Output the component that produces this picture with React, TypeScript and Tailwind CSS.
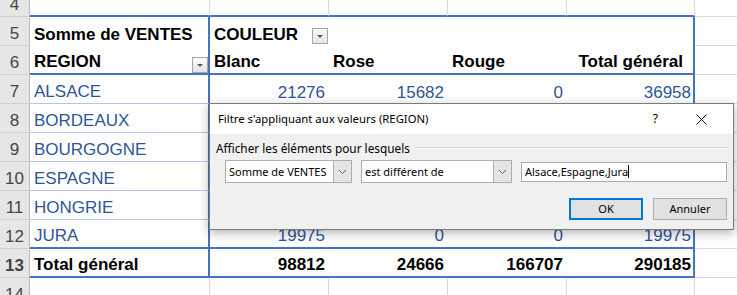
import React from 'react';

// Excel-like pivot table with the value filter dialog open on top of it

const regions = [
  { n: 7, name: 'ALSACE', b: '21276', c: '15682', d: '0', e: '36958' },
  { n: 8, name: 'BORDEAUX', b: '', c: '', d: '', e: '' },
  { n: 9, name: 'BOURGOGNE', b: '', c: '', d: '', e: '' },
  { n: 10, name: 'ESPAGNE', b: '', c: '', d: '', e: '' },
  { n: 11, name: 'HONGRIE', b: '', c: '', d: '', e: '' },
  { n: 12, name: 'JURA', b: '19975', c: '0', d: '0', e: '19975' },
];

function Hdr({ n }: { n: number }) {
  return (
    <div className="w-[30px] shrink-0 flex items-end justify-center pb-[1px] bg-[#e6e6e6] border-r border-b border-r-[#bdbdbd] border-b-[#d0d0d0] text-[#444]">
      {n}
    </div>
  );
}

function Cell({ className, children }: { className: string; children?: React.ReactNode }) {
  return (
    <div className={`relative shrink-0 flex items-end pb-[1px] px-[4px] whitespace-nowrap ${className}`}>
      {children}
    </div>
  );
}

function FilterButton() {
  return (
    <div className="w-[16px] h-[16px] bg-gradient-to-b from-[#fafafa] to-[#e4e4e4] border border-[#a6a6a6] flex items-center justify-center">
      <svg width="8" height="5" viewBox="0 0 8 5">
        <path d="M1 1 L7 1 L4 4 Z" fill="#555" />
      </svg>
    </div>
  );
}

function Chevron() {
  return (
    <svg width="9" height="6" viewBox="0 0 9 6">
      <path d="M1 1 L4.5 4.5 L8 1" fill="none" stroke="#606060" strokeWidth="1" />
    </svg>
  );
}

function Dropdown({ width, label }: { width: string; label: string }) {
  return (
    <div className={`${width} h-[23px] bg-white border border-[#adadad] flex items-stretch`}>
      <span className="flex-1 flex items-center pl-[3px] text-[11px]">{label}</span>
      <span className="w-[18px] bg-[#e5e5e5] border-l border-[#adadad] flex items-center justify-center">
        <Chevron />
      </span>
    </div>
  );
}

export default function App() {
  return (
    <div className="relative w-[738px] h-[295px] overflow-hidden bg-white font-['Liberation_Sans',Arial,sans-serif] text-[17px] leading-[20px] text-black">
      <div className="mt-[-12px] flex flex-col">
        {/* row 4 */}
        <div className="flex h-[29px]">
          <Hdr n={4} />
          <Cell className="w-[180px] border-r border-r-[#d9d9d9] border-b-2 border-b-[#4472c4]" />
          <Cell className="w-[119px] border-r border-r-[#d9d9d9] border-b-2 border-b-[#4472c4]" />
          <Cell className="w-[119px] border-r border-r-[#d9d9d9] border-b-2 border-b-[#4472c4]" />
          <Cell className="w-[119px] border-r border-r-[#d9d9d9] border-b-2 border-b-[#4472c4]" />
          <Cell className="w-[128px] border-r border-r-[#d9d9d9] border-b-2 border-b-[#4472c4]" />
          <Cell className="flex-1 border-r border-b border-[#d9d9d9]" />
        </div>

        {/* row 5 */}
        <div className="flex h-[29px]">
          <Hdr n={5} />
          <Cell className="w-[180px] border-r-2 border-r-[#4472c4] font-bold">Somme de VENTES</Cell>
          <Cell className="w-[119px] font-bold">
            COULEUR
            <span className="absolute right-[1px] bottom-[2px]">
              <FilterButton />
            </span>
          </Cell>
          <Cell className="w-[119px]" />
          <Cell className="w-[119px]" />
          <Cell className="w-[128px] border-r-2 border-r-[#4472c4]" />
          <Cell className="flex-1 border-r border-b border-[#d9d9d9]" />
        </div>

        {/* row 6 */}
        <div className="flex h-[29px]">
          <Hdr n={6} />
          <Cell className="w-[180px] border-r-2 border-r-[#4472c4] border-b-2 border-b-[#4472c4] font-bold">
            REGION
            <span className="absolute right-0 bottom-0">
              <FilterButton />
            </span>
          </Cell>
          <Cell className="w-[119px] border-b-2 border-b-[#4472c4] font-bold">Blanc</Cell>
          <Cell className="w-[119px] border-b-2 border-b-[#4472c4] font-bold">Rose</Cell>
          <Cell className="w-[119px] border-b-2 border-b-[#4472c4] font-bold">Rouge</Cell>
          <Cell className="w-[128px] justify-end pr-[10px] border-r-2 border-r-[#4472c4] border-b-2 border-b-[#4472c4] font-bold">
            Total général
          </Cell>
          <Cell className="flex-1 border-r border-b border-[#d9d9d9]" />
        </div>

        {/* rows 7 to 12 */}
        {regions.map((r) => {
          const last = r.n === 12;
          return (
            <div key={r.n} className="flex h-[29px] text-[#2f5597]">
              <Hdr n={r.n} />
              <Cell
                className={
                  last
                    ? 'w-[180px] border-r-2 border-r-[#4472c4] border-b-2 border-b-[#4472c4]'
                    : 'w-[180px] border-r-2 border-r-[#4472c4] border-b border-b-[#b4c6e7]'
                }
              >
                {r.name}
              </Cell>
              <Cell className={last ? 'w-[119px] justify-end pr-[4px] border-b-2 border-b-[#4472c4]' : 'w-[119px] justify-end pr-[4px]'}>
                {r.b}
              </Cell>
              <Cell className={last ? 'w-[119px] justify-end pr-[4px] border-b-2 border-b-[#4472c4]' : 'w-[119px] justify-end pr-[4px]'}>
                {r.c}
              </Cell>
              <Cell className={last ? 'w-[119px] justify-end pr-[4px] border-b-2 border-b-[#4472c4]' : 'w-[119px] justify-end pr-[4px]'}>
                {r.d}
              </Cell>
              <Cell
                className={
                  last
                    ? 'w-[128px] justify-end pr-[2px] border-r-2 border-r-[#4472c4] border-b-2 border-b-[#4472c4]'
                    : 'w-[128px] justify-end pr-[2px] border-r-2 border-r-[#4472c4]'
                }
              >
                {r.e}
              </Cell>
              <Cell className="flex-1 border-r border-b border-[#d9d9d9]" />
            </div>
          );
        })}

        {/* row 13 */}
        <div className="flex h-[29px] font-bold">
          <Hdr n={13} />
          <Cell className="w-[180px] border-r-2 border-r-[#4472c4] border-b-2 border-b-[#4472c4]">Total général</Cell>
          <Cell className="w-[119px] justify-end pr-[4px] border-b-2 border-b-[#4472c4]">98812</Cell>
          <Cell className="w-[119px] justify-end pr-[4px] border-b-2 border-b-[#4472c4]">24666</Cell>
          <Cell className="w-[119px] justify-end pr-[4px] border-b-2 border-b-[#4472c4]">166707</Cell>
          <Cell className="w-[128px] justify-end pr-[2px] border-r-2 border-r-[#4472c4] border-b-2 border-b-[#4472c4]">290185</Cell>
          <Cell className="flex-1 border-r border-b border-[#d9d9d9]" />
        </div>

        {/* row 14 */}
        <div className="flex h-[29px]">
          <Hdr n={14} />
          <Cell className="w-[180px] border-r border-b border-[#d9d9d9]" />
          <Cell className="w-[119px] border-r border-b border-[#d9d9d9]" />
          <Cell className="w-[119px] border-r border-b border-[#d9d9d9]" />
          <Cell className="w-[119px] border-r border-b border-[#d9d9d9]" />
          <Cell className="w-[128px] border-r border-b border-[#d9d9d9]" />
          <Cell className="flex-1 border-r border-b border-[#d9d9d9]" />
        </div>
      </div>

      {/* value filter dialog */}
      <div className="absolute left-[209px] top-[103px] w-[525px] h-[127px] flex flex-col bg-[#f0f0f0] border border-[#7a7a7a] shadow-[0_3px_10px_rgba(0,0,0,0.3)] font-['Noto_Sans',sans-serif] leading-[16px] text-black">
        <div className="h-[30px] shrink-0 bg-white flex items-center pl-[8px] text-[11.3px]">
          <span>Filtre s'appliquant aux valeurs (REGION)</span>
          <span className="ml-auto text-[12px]">?</span>
          <svg className="ml-[38px] mr-[26px]" width="11" height="11" viewBox="0 0 11 11">
            <path d="M0.5 0.5 L10.5 10.5 M10.5 0.5 L0.5 10.5" stroke="#111" strokeWidth="1" />
          </svg>
        </div>
        <div className="flex-1 flex flex-col px-[6px] pt-[6px]">
          <div className="flex items-center text-[11.8px]">
            <span>Afficher les éléments pour lesquels</span>
            <span className="flex-1 ml-[5px] h-[2px] border-t border-[#d5d5d5] border-b border-b-white" />
          </div>
          <div className="flex items-center mt-[4px] ml-[9px] gap-[9px]">
            <Dropdown width="w-[127px]" label="Somme de VENTES" />
            <Dropdown width="w-[151px]" label="est différent de" />
            <div className="w-[206px] h-[20px] bg-white border border-[#adadad] flex items-center pl-[3px] text-[11px]">
              Alsace,Espagne,Jura
              <span className="w-[1px] h-[13px] bg-black" />
            </div>
          </div>
          <div className="flex justify-end gap-[10px] mt-[15px] text-[11px]">
            <button className="w-[74px] h-[22px] bg-[#e1e1e1] border-2 border-[#0078d7] flex items-center justify-center">
              OK
            </button>
            <button className="w-[74px] h-[22px] bg-[#e1e1e1] border border-[#adadad] flex items-center justify-center">
              Annuler
            </button>
          </div>
        </div>
      </div>
    </div>
  );
}
